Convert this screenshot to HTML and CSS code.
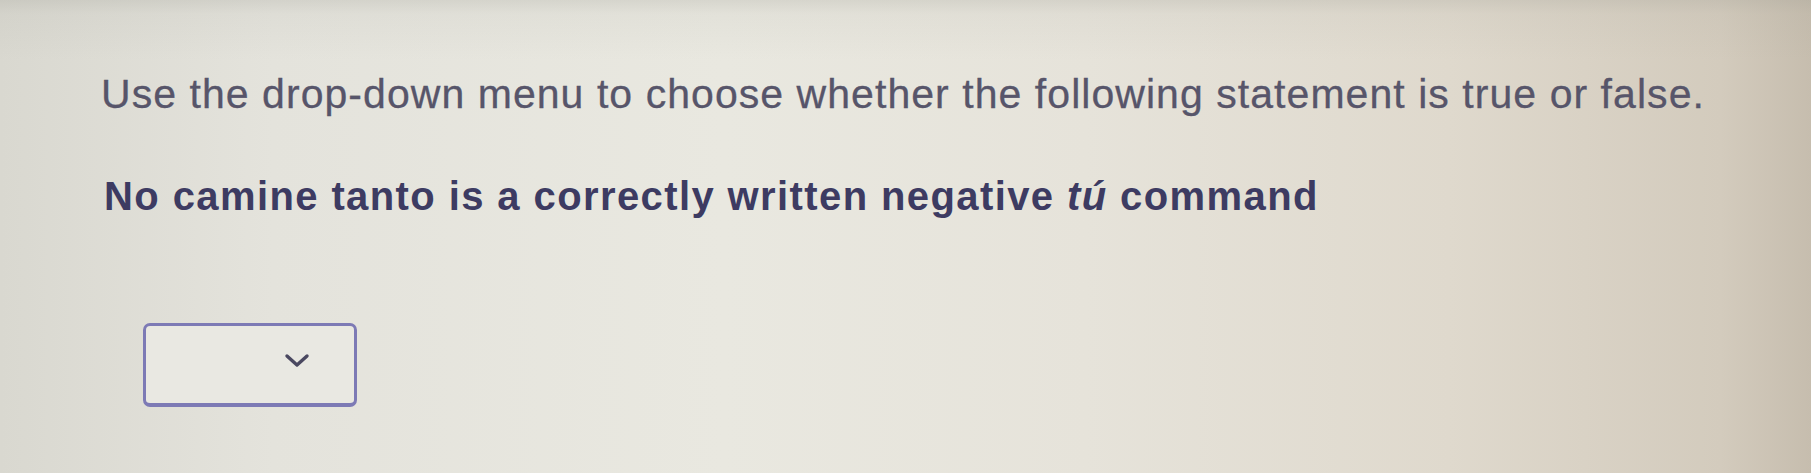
FILE: index.html
```html
<!DOCTYPE html>
<html lang="en">
<head>
<meta charset="utf-8">
<title>True or false</title>
<link rel="stylesheet" href="styles.css">
</head>
<body>
<main class="page">
  <p class="prompt">Use the drop-down menu to choose whether the following statement is true or false.</p>
  <p class="statement">No camine tanto is a correctly written negative <em>tú</em> command</p>
  <div class="select" role="combobox" aria-label="Choose true or false">
    <svg class="chev" width="26" height="16" viewBox="0 0 26 16" aria-hidden="true">
      <path d="M3 3 L13 12 L23 3" fill="none" stroke="#4a4860" stroke-width="3.4" stroke-linecap="round" stroke-linejoin="round"/>
    </svg>
  </div>
</main>
</body>
</html>
```
FILE: styles.css
```css
html, body {
  margin: 0;
  height: 100%;
}
body {
  background:
    linear-gradient(180deg, rgba(150,150,140,0.22) 0px, rgba(150,150,140,0.08) 14px, rgba(150,150,140,0) 60px),
    linear-gradient(90deg, #d9d8d0 0%, #e4e3dc 15%, #e9e8e0 40%, #e6e3da 60%, #dfd9cd 80%, #d3cbbd 95%, #c6bdae 100%);
  font-family: "Liberation Sans", Arial, sans-serif;
  overflow: hidden;
}
.page {
  padding: 71px 0 0 101px;
  display: flex;
  flex-direction: column;
  align-items: flex-start;
}
.prompt {
  margin: 0;
  font-size: 41px;
  line-height: 46px;
  color: #57556a;
  letter-spacing: 1.05px;
  -webkit-text-stroke: 0.3px #57556a;
}
.statement {
  margin: 56px 0 0 3px;
  font-size: 40px;
  line-height: 46px;
  font-weight: bold;
  color: #3d3b62;
  letter-spacing: 1.4px;
}
.statement em {
  font-style: italic;
}
.select {
  margin: 104px 0 0 42px;
  width: 214px;
  height: 84px;
  border: 3px solid #7d7ab5;
  border-bottom-width: 4px;
  border-radius: 7px;
  background: #e9e8e2;
  display: flex;
  align-items: center;
  justify-content: flex-end;
  padding-right: 44px;
  box-sizing: border-box;
}
.chev {
  margin-top: -8px;
}
```
